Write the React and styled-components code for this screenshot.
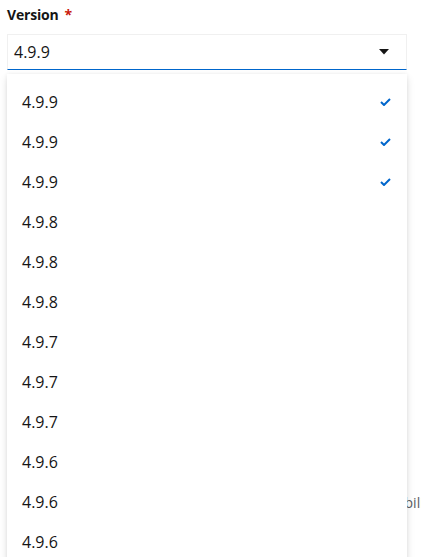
import React from "react";
import styled, { createGlobalStyle } from "styled-components";

const Global = createGlobalStyle`
  html, body { margin: 0; padding: 0; background: #fff; }
  body { font-family: "Open Sans", "Liberation Sans", sans-serif; color: #151515; overflow: hidden; }
`;

const Page = styled.div`
  position: relative;
  width: 421px;
  height: 557px;
  overflow: hidden;
  padding: 4px 7px 0;
  box-sizing: border-box;
`;

const Label = styled.div`
  display: flex;
  align-items: center;
  gap: 6px;
  font-size: 14px;
  font-weight: 700;
  line-height: 21px;
  height: 21px;
  margin-bottom: 9px;
  letter-spacing: -0.2px;
`;

const Required = styled.span`
  color: #c9190b;
  font-weight: 700;
`;

const SelectWrap = styled.div`
  position: relative;
  width: 400px;
`;

const Toggle = styled.div`
  box-sizing: border-box;
  height: 36px;
  width: 400px;
  display: flex;
  align-items: center;
  justify-content: space-between;
  padding: 0 17px 0 6px;
  border: 1px solid #f0f0f0;
  border-bottom: 1px solid #06c;
  font-size: 16px;
`;

const Menu = styled.ul`
  position: absolute;
  top: 40px;
  left: 0;
  width: 400px;
  margin: 0;
  padding: 8px 0;
  list-style: none;
  background: #fff;
  box-shadow: 0 4px 8px 0 rgba(3, 3, 3, 0.12), 0 0 4px 0 rgba(3, 3, 3, 0.06);
  z-index: 2;
`;

const Item = styled.li`
  height: 40px;
  display: flex;
  align-items: center;
  justify-content: space-between;
  padding: 0 16px 0 15px;
  font-size: 16px;
`;

const Helper = styled.div`
  position: absolute;
  top: 493px;
  left: 7px;
  white-space: nowrap;
  font-size: 14px;
  color: #5a5e63;
  padding-left: 217px;
`;

const Caret = () => (
  <svg width="10" height="6" viewBox="0 0 10 6">
    <path d="M0 0h10L5 5.5z" fill="#151515" />
  </svg>
);

const Check = () => (
  <svg width="11" height="8" viewBox="0 0 11 8">
    <path d="M1 4l3 3 6-6" fill="none" stroke="#06c" strokeWidth="2" />
  </svg>
);

const items = [
  ["4.9.9", true], ["4.9.9", true], ["4.9.9", true],
  ["4.9.8"], ["4.9.8"], ["4.9.8"],
  ["4.9.7"], ["4.9.7"], ["4.9.7"],
  ["4.9.6"], ["4.9.6"], ["4.9.6"],
  ["4.9.5"], ["4.9.5"],
];

export default function App() {
  return (
    <>
      <Global />
      <Page>
        <Label>
          Version <Required>*</Required>
        </Label>
        <SelectWrap>
          <Toggle>
            <span>4.9.9</span>
            <Caret />
          </Toggle>
          <Menu>
            {items.map(([v, sel], i) => (
              <Item key={i}>
                <span>{v}</span>
                {sel && <Check />}
              </Item>
            ))}
          </Menu>
        </SelectWrap>
        <Helper>Select a version for compatibility</Helper>
      </Page>
    </>
  );
}
